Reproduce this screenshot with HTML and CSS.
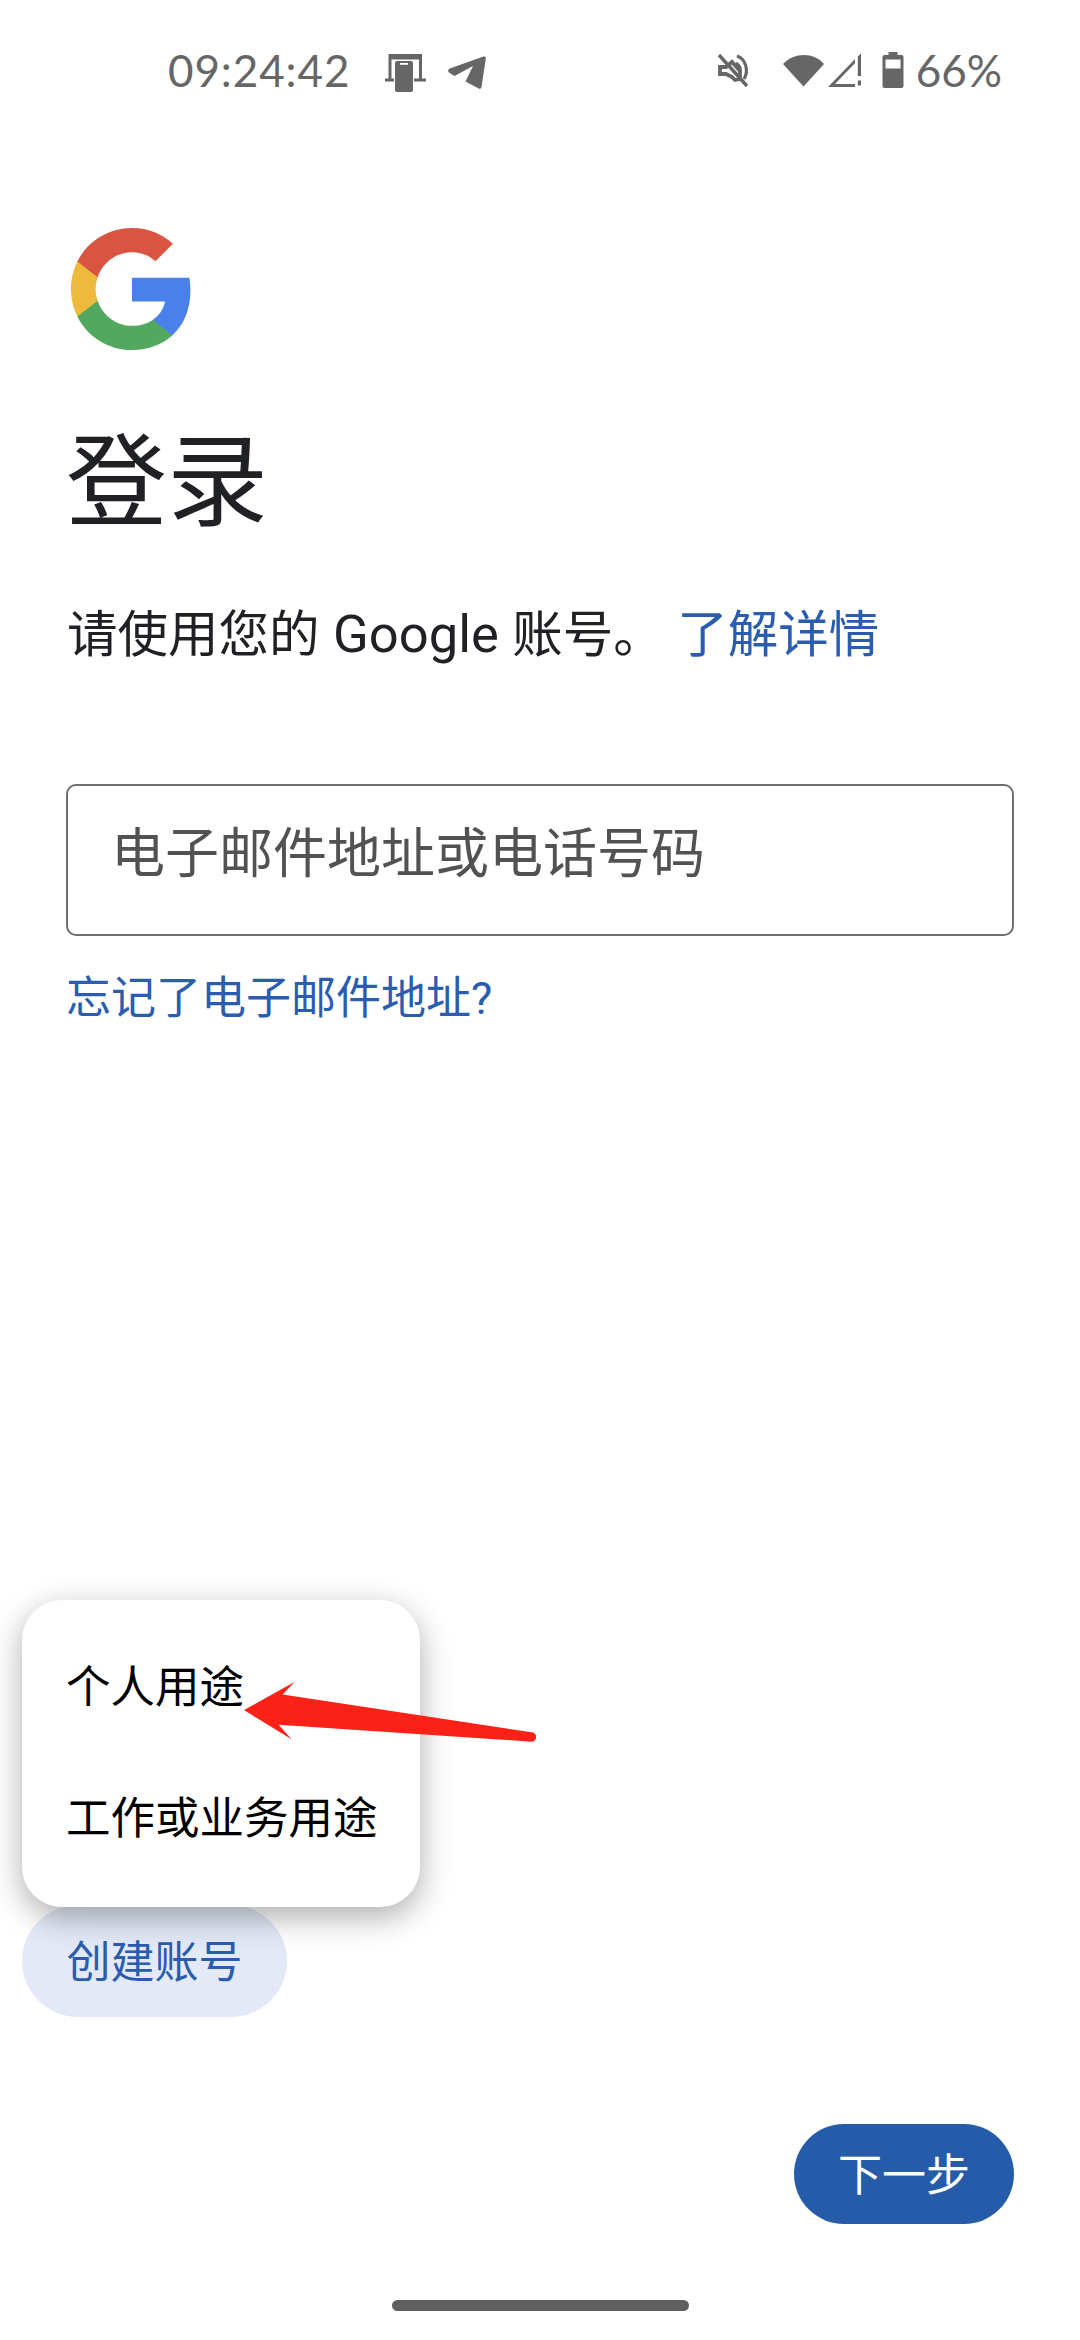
FILE: index.html
```html
<!DOCTYPE html>
<html lang="zh-CN">
<head>
<meta charset="utf-8">
<title>登录</title>
<link rel="stylesheet" href="styles.css">
</head>
<body>
<div class="screen">
  <header class="status">
    <div class="status-left">
      <span class="time">09:24:42</span>
      <svg class="ic ic-cast" viewBox="0 0 41 38"><path d="M3.500 0H37v26h-3V5.500H6.500V26h-3z" fill="#666"/><path d="M0 24.500h9v3H0zM29 24.500h12v3H29z" fill="#666"/><path d="M10 9a2 2 0 0 1 2-2h14a2 2 0 0 1 2 2v27a2 2 0 0 1-2 2H12a2 2 0 0 1-2-2z" fill="#666"/><path d="M15 9h8v1.800h-8z" fill="#fff"/></svg>
      <svg class="ic ic-send" viewBox="0 0 38 34"><path d="M35.500.6c1.500-.5 2.500.4 2.300 1.900l-4.300 28.400c-.2 1.500-1.500 2.200-2.800 1.500L17.500 25.500 25 10 6.500 20 1.500 16.800C-.3 15.700-.3 13.300 1.800 12.500z" fill="#666"/></svg>
    </div>
    <div class="status-right">
      <svg class="ic ic-mute" viewBox="0 0 36 36"><path d="M4 3l28 31" stroke="#666" stroke-width="3.400" fill="none"/><path d="M5 15h6l6-5 8 9v8l-5 1-3-3-6-3H5z" fill="none" stroke="#666" stroke-width="3.800"/><path d="M22 4c9 3 12 15 7 23M21 11c3 2 5 5 4 9" fill="none" stroke="#666" stroke-width="3.200"/></svg>
      <svg class="ic ic-wifi" viewBox="0 0 42 34"><path d="M0 11C11-1 31-1 41 11L20.500 33.500z" fill="#666"/></svg>
      <svg class="ic ic-signal" viewBox="0 0 36 34"><path d="M3.500 32.500L30 5v27.500z" fill="none" stroke="#666" stroke-width="2.800"/><path d="M27 0h7v34h-7z" fill="#fff"/><path d="M33 .5v22.500h-3.200V3.500zM29.800 27.500H33V32.500h-3.200z" fill="#666"/></svg>
      <svg class="ic ic-batt" viewBox="0 0 22 36"><path d="M6.500 0h9v3h4a2 2 0 0 1 2 2v29a2 2 0 0 1-2 2h-17a2 2 0 0 1-2-2V5a2 2 0 0 1 2-2h4z" fill="#666"/><path d="M3.500 7.500h15v9h-15z" fill="#fff"/></svg>
      <span class="pct">66%</span>
    </div>
  </header>

  <main class="content">
    <svg class="logo" viewBox="0 0 48 48" preserveAspectRatio="none">
      <path fill="#4a80ea" d="M47 24.500c0-1.700-.2-3.300-.4-4.900H24v9.300h13c-.6 3-2.300 5.500-4.800 7.200v6h7.800C44.500 38 47 31.800 47 24.500z"/>
      <path fill="#53a85f" d="M24 48c6.500 0 11.900-2.200 15.900-5.800l-7.700-6c-2.200 1.400-5 2.300-8.200 2.300-6.300 0-11.600-4.200-13.500-9.900h-8v6.200C6.400 42.700 14.600 48 24 48z"/>
      <path fill="#eeba3e" d="M10.500 28.600c-.5-1.400-.8-3-.8-4.600s.3-3.200.8-4.600v-6.200h-8C.9 16.400 0 20.100 0 24s.9 7.600 2.500 10.800z"/>
      <path fill="#d95441" d="M24 9.500c3.500 0 6.700 1.200 9.200 3.600l6.900-6.900C35.900 2.400 30.500 0 24 0 14.600 0 6.400 5.300 2.500 13.200l8 6.200C12.400 13.700 17.700 9.500 24 9.500z"/>
    </svg>
    <h1 class="title">登录</h1>
    <p class="sub">请使用您的 <span class="latin">Google</span> 账号。 <a class="link">了解详情</a></p>
    <div class="field"><span class="placeholder">电子邮件地址或电话号码</span></div>
    <a class="forgot">忘记了电子邮件地址?</a>
  </main>

  <div class="actions">
    <button class="create">创建账号</button>
  </div>
  <footer class="footer">
    <button class="next">下一步</button>
  </footer>
  <div class="home-wrap"><div class="home"></div></div>

  <div class="menu">
    <div class="menu-item">个人用途</div>
    <div class="menu-item">工作或业务用途</div>
  </div>
  <svg class="arrow" viewBox="0 0 300 70" preserveAspectRatio="none"><path d="M0 31L51 2 39 15 292 54a5 5 0 0 1-1 9.500L35 46l13 15z" fill="#fa2216"/></svg>
</div>
</body>
</html>
```
FILE: styles.css
```css
* { box-sizing: border-box; }
html, body { margin: 0; padding: 0; background: #fff; }
.screen {
  position: relative;
  width: 1080px;
  height: 2340px;
  display: flex;
  flex-direction: column;
  overflow: hidden;
  font-family: "Roboto", "Noto Sans CJK SC", sans-serif;
  color: #202124;
}
.status {
  height: 140px;
  display: flex;
  justify-content: space-between;
  align-items: center;
  padding: 0 78px 0 168px;
  color: #666;
  font-family: "Lato", sans-serif;
  font-size: 44px;
}
.status-left, .status-right { display: flex; align-items: center; }
.ic { display: block; flex: none; }
.time { letter-spacing: .9px; }
.ic-cast { width: 41px; height: 38px; margin: 6px 0 0 35px; }
.ic-send { width: 38px; height: 34px; margin: 5px 0 0 22px; }
.ic-mute { width: 36px; height: 36px; margin-right: 32px; }
.ic-wifi { width: 42px; height: 34px; }
.ic-signal { width: 36px; height: 34px; margin-left: 3px; }
.ic-batt { width: 22px; height: 36px; margin-left: 18px; }
.pct { margin-left: 12px; }
.content {
  flex: 1;
  display: flex;
  flex-direction: column;
  align-items: flex-start;
  padding: 88px 66px 0;
}
.logo { width: 122px; height: 122px; margin-left: 5px; display: block; }
.title {
  margin: 59px 0 0 0;
  font-family: "Noto Sans CJK SC", sans-serif;
  font-weight: 400;
  font-size: 101px;
  line-height: 130px;
}
.sub {
  margin: 61px 0 0 1px;
  font-size: 50.500px;
  line-height: 70px;
  word-spacing: 1px;
  color: #202124;
}
.latin { font-size: 52.500px; line-height: 60px; }
.link { color: #2a5caf; }
.field {
  margin-top: 114px;
  width: 948px;
  height: 152px;
  border: 2px solid #6d7073;
  border-radius: 10px;
  padding: 34px 43px 0;
}
.placeholder { font-size: 54px; line-height: 70px; color: #50534f; display: block; }
.forgot {
  margin: 32px 0 0 0;
  font-size: 45px;
  line-height: 62px;
  color: #2a5caf;
}
.actions { padding: 0 0 0 22px; }
.create {
  width: 265px;
  height: 112px;
  border: 0;
  border-radius: 56px;
  background: #e3e9f6;
  color: #2a5caf;
  font: inherit;
  font-size: 44px;
  padding: 0 0 4px;
}
.footer {
  display: flex;
  justify-content: flex-end;
  padding: 107px 66px 0;
}
.next {
  width: 220px;
  height: 100px;
  border: 0;
  border-radius: 50px;
  background: #265ba9;
  color: #fff;
  font: inherit;
  font-size: 44px;
  padding: 0 0 4px;
}
.home-wrap { height: 116px; padding-top: 76px; display: flex; justify-content: center; }
.home { width: 297px; height: 11px; border-radius: 6px; background: #5f5f5f; }
.menu {
  position: absolute;
  left: 22px;
  top: 1600px;
  width: 398px;
  height: 307px;
  background: #fff;
  border-radius: 40px;
  padding: 18px 44px;
  box-shadow: 0 10px 32px rgba(0,0,0,.32);
  font-size: 44.500px;
  color: #000;
}
.menu-item { height: 131px; display: flex; align-items: center; white-space: nowrap; }
.arrow { position: absolute; left: 244px; top: 1680px; width: 297px; height: 68px; }
```
